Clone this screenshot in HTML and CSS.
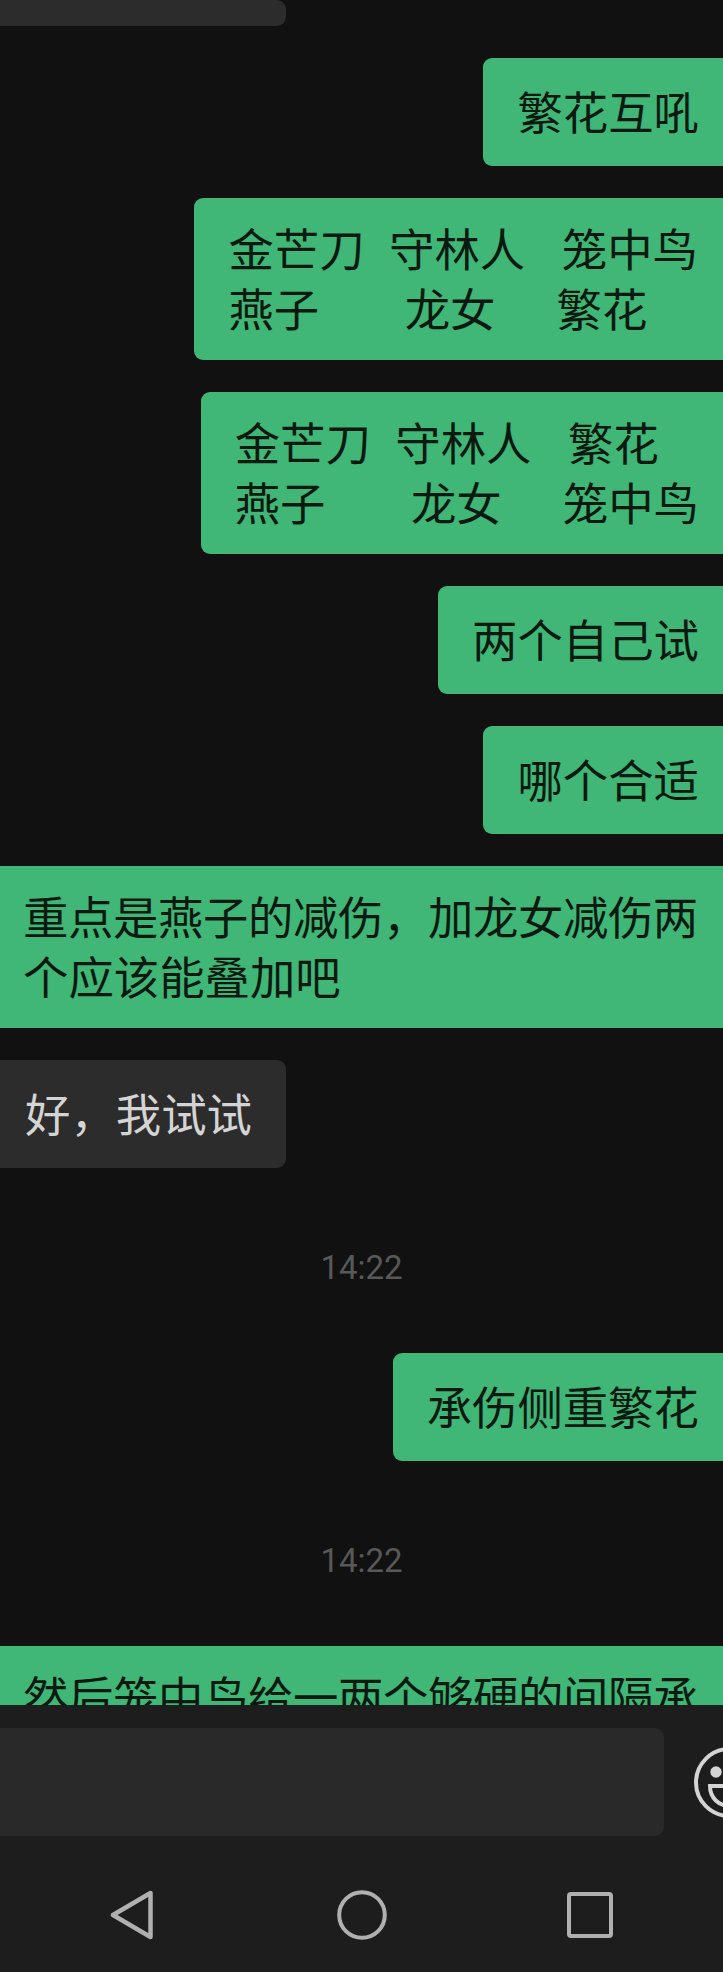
FILE: index.html
```html
<!DOCTYPE html>
<html lang="zh-CN">
<head>
    <meta charset="UTF-8">
    <meta name="viewport" content="width=device-width, initial-scale=1.0">
    <title>聊天</title>
    <link rel="stylesheet" href="styles.css">
</head>
<body>
    <div class="chat">
        <div class="bubble incoming stub"></div>
        <div class="bubble outgoing">繁花互吼</div>
        <div class="bubble outgoing two-line team-a">金芒刀  守林人   笼中鸟
燕子       龙女     繁花</div>
        <div class="bubble outgoing two-line">金芒刀  守林人   繁花
燕子       龙女     笼中鸟</div>
        <div class="bubble outgoing">两个自己试</div>
        <div class="bubble outgoing">哪个合适</div>
        <div class="bubble outgoing two-line wide"><div><span class="tight">重点是燕子的减伤，加龙女减伤两</span>
个应该能叠加吧</div></div>
        <div class="bubble incoming">好，我试试</div>
        <div class="time">14:22</div>
        <div class="bubble outgoing">承伤侧重繁花</div>
        <div class="time">14:22</div>
        <div class="bubble outgoing two-line wide cut"><span class="tight">然后笼中鸟给一两个够硬的间隔承</span></div>
    </div>

    <div class="composer">
        <div class="input"></div>
        <svg class="emoji" width="71" height="71" viewBox="0 0 71 71">
            <circle cx="35.5" cy="35.5" r="33.5" fill="none" stroke="#d4d4d4" stroke-width="4"/>
            <circle cx="22" cy="25" r="5.7" fill="#d4d4d4"/>
            <path d="M16 39h39c0 12-9 20-19.5 20S16 51 16 39z" fill="none" stroke="#d4d4d4" stroke-width="4"/>
        </svg>
    </div>

    <div class="nav-bar">
        <svg width="46" height="50" viewBox="0 0 46 50">
            <path d="M40.5 3v44L3 25z" fill="none" stroke="#b0b0b0" stroke-width="4.5" stroke-linejoin="round"/>
        </svg>
        <svg width="50" height="50" viewBox="0 0 50 50">
            <circle cx="25" cy="25" r="22.8" fill="none" stroke="#b0b0b0" stroke-width="4"/>
        </svg>
        <svg width="46" height="46" viewBox="0 0 46 46">
            <rect x="2" y="2" width="42" height="42" rx="2" fill="none" stroke="#b0b0b0" stroke-width="4"/>
        </svg>
    </div>
</body>
</html>
```

FILE: styles.css
```css
* {
    margin: 0;
    padding: 0;
    box-sizing: border-box;
}

body {
    background: #111111;
    width: 723px;
    height: 1972px;
    overflow: hidden;
    display: flex;
    flex-direction: column;
    font-family: "Liberation Sans", "Noto Sans CJK SC", sans-serif;
}

.chat {
    height: 1705px;
    flex: none;
    overflow: hidden;
    display: flex;
    flex-direction: column;
    gap: 32px;
}

.bubble {
    flex: none;
    display: flex;
    align-items: center;
    min-height: 108px;
    font-size: 45.4px;
    line-height: 60px;
    word-spacing: -0.4px;
    white-space: pre;
}

.outgoing {
    align-self: flex-end;
    background: #40b677;
    color: #0b1a10;
    padding: 24px 24px 18px 34px;
    border-radius: 9px 0 0 9px;
}

.incoming {
    align-self: flex-start;
    width: 286px;
    background: #2c2c2c;
    color: #d4d4d4;
    padding: 24px 25px 18px;
    border-radius: 0 9px 9px 0;
}

.stub {
    min-height: 26px;
    height: 26px;
    padding: 0;
}

.two-line {
    min-height: 162px;
}

.team-a {
    padding-left: 34px;
    padding-right: 25px;
}

.wide {
    align-self: stretch;
    padding-left: 23px;
    border-radius: 0;
}

.tight {
    letter-spacing: -0.4px;
}

.cut {
    align-items: flex-start;
}

.time {
    flex: none;
    text-align: center;
    font-family: "Roboto", sans-serif;
    font-size: 33px;
    line-height: 40px;
    color: #585858;
    margin: 48px 0 33px;
}

.composer {
    height: 145px;
    flex: none;
    background: #1d1d1d;
    display: flex;
    align-items: center;
    gap: 30px;
    padding: 23px 0 14px;
    overflow: hidden;
}

.input {
    width: 664px;
    height: 108px;
    background: #292929;
    border-radius: 0 9px 9px 0;
    flex: none;
}

.emoji {
    flex: none;
}

.nav-bar {
    flex: 1;
    background: #1d1d1d;
    display: flex;
    align-items: center;
    justify-content: space-between;
    padding: 8px 110px 0;
}
```
